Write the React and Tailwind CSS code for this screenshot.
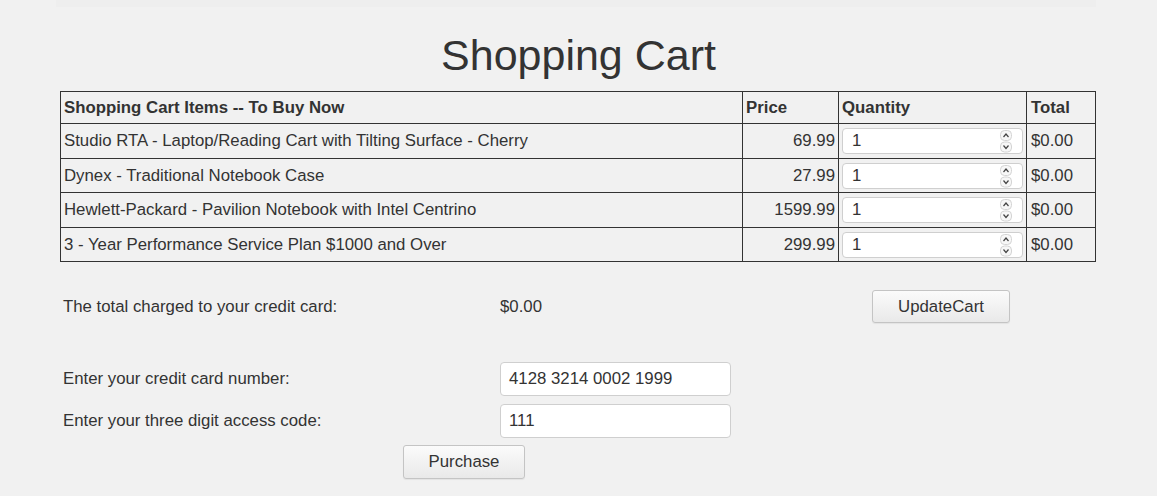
import React from "react";

const items = [
  { name: "Studio RTA - Laptop/Reading Cart with Tilting Surface - Cherry", price: "69.99", h: "h-[35px]" },
  { name: "Dynex - Traditional Notebook Case", price: "27.99", h: "h-[34px]" },
  { name: "Hewlett-Packard - Pavilion Notebook with Intel Centrino", price: "1599.99", h: "h-[35px]" },
  { name: "3 - Year Performance Service Plan $1000 and Over", price: "299.99", h: "h-[34px]" },
];

function Spinner() {
  return (
    <svg width="14" height="25" viewBox="0 0 14 25" className="absolute right-[9px] top-[0px]">
      <rect x="1.5" y="1.5" width="11" height="10" rx="4" fill="#f7f7f7" stroke="#d4d4d4" />
      <rect x="1.5" y="13" width="11" height="10" rx="4" fill="#f7f7f7" stroke="#d4d4d4" />
      <path d="M4.5 8 L7 5 L9.5 8" fill="none" stroke="#444" strokeWidth="1.2" />
      <path d="M4.5 16.5 L7 19.5 L9.5 16.5" fill="none" stroke="#444" strokeWidth="1.2" />
    </svg>
  );
}

function Btn({ children, className }) {
  return (
    <button
      className={
        "flex items-center justify-center rounded-[3px] border border-[#c4c4c4] bg-gradient-to-b from-[#fbfbfb] to-[#e9e9e9] text-[16.8px] text-[#333] shadow-[0_1px_1px_rgba(0,0,0,0.06)] " +
        className
      }
    >
      {children}
    </button>
  );
}

export default function App() {
  return (
    <div className="min-h-[496px] w-full bg-[#f1f1f1] text-[#333] font-['Liberation_Sans',Arial,sans-serif] text-[16.8px]">
      <div className="ml-[56px] h-[7px] w-[1040px] bg-[#eeeeee]" />
      <h1 className="mt-[24px] h-[48px] text-center text-[43px] leading-[48px] font-normal text-[#333]">
        Shopping Cart
      </h1>
      <div className="ml-[60px] mt-[12px] grid w-[1036px] grid-cols-[682px_96px_188px_69px] border-l border-t border-[#333]">
        <div className="flex h-[32px] items-center border-b border-r border-[#333] pl-[3px] font-bold">
          Shopping Cart Items -- To Buy Now
        </div>
        <div className="flex h-[32px] items-center border-b border-r border-[#333] pl-[3px] font-bold">Price</div>
        <div className="flex h-[32px] items-center border-b border-r border-[#333] pl-[3px] font-bold">Quantity</div>
        <div className="flex h-[32px] items-center border-b border-r border-[#333] pl-[4px] font-bold">Total</div>
        {items.map((it) => (
          <React.Fragment key={it.name}>
            <div className={"flex items-center border-b border-r border-[#333] pl-[3px] " + it.h}>{it.name}</div>
            <div className={"flex items-center justify-end border-b border-r border-[#333] pr-[3px] " + it.h}>
              {it.price}
            </div>
            <div className={"flex items-center border-b border-r border-[#333] pl-[3px] " + it.h}>
              <div className="relative flex h-[26px] w-[181px] items-center rounded-[4px] border border-[#cfcfcf] bg-white pl-[9px]">
                1
                <Spinner />
              </div>
            </div>
            <div className={"flex items-center border-b border-r border-[#333] pl-[4px] " + it.h}>$0.00</div>
          </React.Fragment>
        ))}
      </div>

      <div className="ml-[63px] mt-[28px] flex h-[33px] items-center">
        <div className="w-[437px]">The total charged to your credit card:</div>
        <div className="w-[372px]">$0.00</div>
        <Btn className="h-[33px] w-[138px]">UpdateCart</Btn>
      </div>

      <div className="ml-[63px] mt-[39px] flex h-[34px] items-center">
        <div className="w-[437px]">Enter your credit card number:</div>
        <div className="flex h-[34px] w-[231px] items-center rounded-[4px] border border-[#cfcfcf] bg-white pl-[8px]">
          4128 3214 0002 1999
        </div>
      </div>
      <div className="ml-[63px] mt-[8px] flex h-[34px] items-center">
        <div className="w-[437px]">Enter your three digit access code:</div>
        <div className="flex h-[34px] w-[231px] items-center rounded-[4px] border border-[#cfcfcf] bg-white pl-[8px]">
          111
        </div>
      </div>
      <div className="ml-[403px] mt-[7px] flex">
        <Btn className="h-[34px] w-[122px]">Purchase</Btn>
      </div>
    </div>
  );
}
